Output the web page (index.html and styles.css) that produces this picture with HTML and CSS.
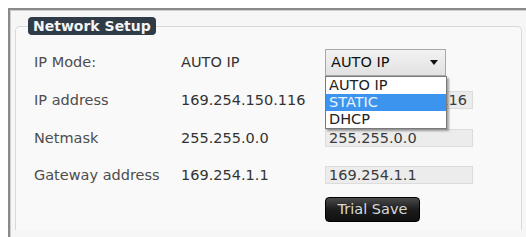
FILE: index.html
```html
<!DOCTYPE html>
<html lang="en">
<head>
  <meta charset="UTF-8" />
  <title>Network Setup</title>
  <link rel="stylesheet" href="styles.css">
</head>
<body>
  <div class="frame">
    <fieldset class="setup">
      <legend>Network Setup</legend>

      <div class="grid">
        <!-- IP MODE -->
        <div class="label">IP Mode:</div>
        <div class="value">AUTO IP</div>
        <div class="field">
          <div class="select">
            <span>AUTO IP</span>
            <span class="arrow"></span>
          </div>
          <ul class="options">
            <li>AUTO IP</li>
            <li class="active">STATIC</li>
            <li>DHCP</li>
          </ul>
        </div>

        <!-- IP ADDRESS -->
        <div class="label">IP address</div>
        <div class="value">169.254.150.116</div>
        <div class="field"><div class="input input-end">169.254.150.116</div></div>

        <!-- NETMASK -->
        <div class="label">Netmask</div>
        <div class="value">255.255.0.0</div>
        <div class="field"><div class="input">255.255.0.0</div></div>

        <!-- GATEWAY -->
        <div class="label">Gateway address</div>
        <div class="value">169.254.1.1</div>
        <div class="field"><div class="input">169.254.1.1</div></div>

        <div></div>
        <div></div>
        <div class="field"><button class="save">Trial Save</button></div>
      </div>
    </fieldset>
  </div>
</body>
</html>
```

FILE: styles.css
```css
body {
  margin: 0;
  background: #fff;
  font-family: "DejaVu Sans", Verdana, sans-serif;
  overflow: hidden;
}

.frame {
  margin: 8px 0 0 8px;
  width: 518px;
  height: 229px;
  padding: 7px 0 0 5px;
  background: #f6f6f6;
  border-top: 2px solid #8a8a8a;
  border-left: 2px solid #8a8a8a;
  box-shadow: inset 1px 1px 0 #cfcfcf;
  box-sizing: border-box;
}

.setup {
  margin: 0;
  width: 507px;
  height: 213px;
  padding: 8px 18px 0 18px;
  border: 1px solid #d9d9d9;
  border-bottom: none;
  border-radius: 5px 5px 0 0;
  background: #f9f9f9;
  box-sizing: border-box;
}

.setup legend {
  margin-left: -6px;
  padding: 0 5px;
  height: 18px;
  line-height: 18px;
  background: #2f3b47;
  color: #f2f4f6;
  font-size: 14px;
  font-weight: bold;
  border-radius: 4px;
}

.grid {
  display: grid;
  grid-template-columns: 147px 144px 1fr;
  grid-template-rows: 38px 38px 37px 37px 30px;
  align-items: center;
  font-size: 14.5px;
}

.label {
  color: #4d4d4d;
}

.value {
  color: #333;
}

.field {
  position: relative;
}

.select {
  width: 121px;
  height: 27px;
  padding: 0 0 0 5px;
  display: flex;
  align-items: center;
  justify-content: space-between;
  background: linear-gradient(#f2f2f2, #e2e2e2);
  border: 1px solid #a8a8a8;
  box-sizing: border-box;
  color: #111;
}

.arrow {
  margin-right: 7px;
  border-left: 4px solid transparent;
  border-right: 4px solid transparent;
  border-top: 5px solid #111;
}

.options {
  position: absolute;
  top: 27px;
  left: 0;
  width: 122px;
  margin: 0;
  padding: 0;
  list-style: none;
  background: #fff;
  border: 1px solid #7a7a7a;
  box-shadow: 2px 2px 2px rgba(0, 0, 0, 0.35);
  box-sizing: border-box;
  z-index: 10;
}

.options li {
  height: 17px;
  line-height: 17px;
  padding-left: 3px;
  color: #222;
}

.options li.active {
  background: #3d94ee;
  color: #eaf3ff;
}

.input {
  width: 148px;
  height: 18px;
  line-height: 17px;
  padding-left: 3px;
  background: #ececec;
  border: 1px solid #dcdcdc;
  box-sizing: border-box;
  color: #3a3a3a;
}

.input-end {
  padding: 0 5px 0 0;
  text-align: right;
}

.save {
  width: 95px;
  height: 25px;
  padding: 0;
  margin-top: 2px;
  font-family: inherit;
  font-size: 14.5px;
  color: #d8d8d8;
  background: linear-gradient(#4a4a4a, #1c1c1c 50%, #111);
  border: 1px solid #000;
  border-radius: 4px;
}
```
